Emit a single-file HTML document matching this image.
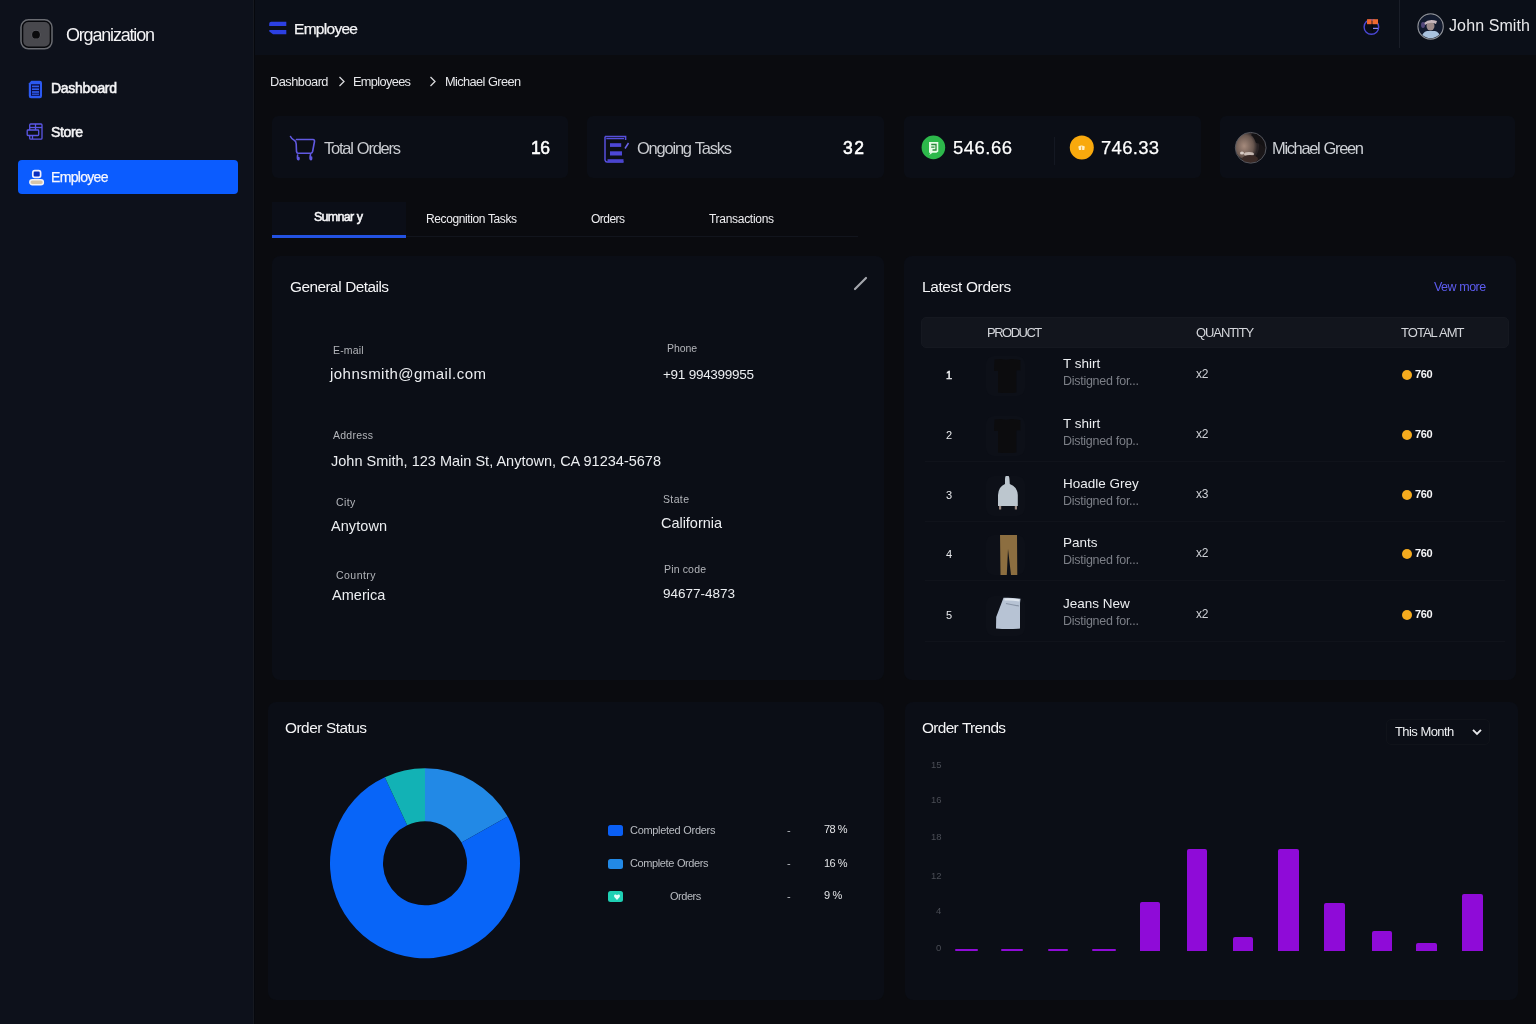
<!DOCTYPE html>
<html><head><meta charset="utf-8"><title>Employee</title>
<style>
html,body{margin:0;padding:0;width:1536px;height:1024px;overflow:hidden;background:#0a0b0f;font-family:"Liberation Sans",sans-serif;}
.t{position:absolute;white-space:nowrap;line-height:1;will-change:transform;}
</style></head><body>
<div style="position:absolute;left:0;top:0;width:254px;height:1024px;background:#0d111b"></div>
<div style="position:absolute;left:253px;top:0;width:1px;height:1024px;background:#161920"></div>
<div style="position:absolute;left:254px;top:0;width:1px;height:1024px;background:#06080d"></div>
<div style="position:absolute;left:255px;top:0;width:1281px;height:55px;background:#0b0f18"></div>
<svg style="position:absolute;left:19px;top:18px" width="35" height="33" viewBox="0 0 35 33">
<rect x="2" y="1.8" width="31" height="29" rx="7.5" fill="#07080c" stroke="#6a6c72" stroke-width="1.5"/>
<rect x="4.3" y="4" width="26.4" height="24.5" rx="5" fill="#48484d"/>
<circle cx="17" cy="16.7" r="4.6" fill="#5a5a60"/><circle cx="17" cy="16.7" r="3.9" fill="#0a0a0c"/>
</svg>
<svg style="position:absolute;left:28px;top:80px" width="15" height="19" viewBox="0 0 15 19">
<path d="M3.3 0.8 H11.8 Q14 0.8 14 3 V16 Q14 18.2 11.8 18.2 H3 Q0.8 18.2 0.8 16 V3.5 Z" fill="#2b59f2"/>
<rect x="3" y="4.2" width="9" height="11.6" fill="#0a0f4a"/>
<rect x="4" y="5.6" width="7" height="1.6" fill="#2f5cf0"/><rect x="4" y="8.4" width="7" height="1.6" fill="#2f5cf0"/><rect x="4" y="11.2" width="7" height="1.6" fill="#2f5cf0"/><rect x="4" y="13.6" width="7" height="1.2" fill="#2f5cf0"/>
</svg>
<svg style="position:absolute;left:26px;top:123px" width="17" height="18" viewBox="0 0 17 18">
<g fill="none" stroke="#5b57e6" stroke-width="1.3">
<rect x="3.7" y="1" width="12.3" height="15.2" rx="1"/><rect x="1.2" y="7" width="11.5" height="5.5" rx="0.8" fill="#0c1019"/>
<line x1="9.5" y1="1" x2="9.5" y2="7"/><line x1="4" y1="4.5" x2="16" y2="4.5"/><line x1="6.5" y1="12.5" x2="6.5" y2="16"/></g>
</svg>
<div style="position:absolute;left:18px;top:160px;width:220px;height:34px;background:#0b5cff;border-radius:4px"></div>
<svg style="position:absolute;left:28px;top:169px" width="17" height="17" viewBox="0 0 17 17">
<path d="M6.8 1.6 H10.6 Q12.6 1.6 12.6 3.8 V6.6 Q12.6 8.4 10.6 8.4 H6.8 Q4.8 8.4 4.8 6.6 V3.8 Q4.8 1.6 6.8 1.6 Z" fill="#0a2fc0" stroke="#eef0ff" stroke-width="1.7"/>
<rect x="1.8" y="10.8" width="13.6" height="5" rx="2.5" fill="#d6c4a8" stroke="#f2f2f6" stroke-width="1.4"/>
</svg>
<svg style="position:absolute;left:268px;top:20px" width="20" height="16" viewBox="0 0 20 16">
<path d="M3.2 1.8 H18.3 V6 H1.2 V3.8 Q1.2 1.8 3.2 1.8 Z" fill="#2c40e2"/>
<path d="M1.3 9.9 H18.3 V14.2 H5 L1.3 11.5 Z" fill="#2c40e2"/>
</svg>
<svg style="position:absolute;left:1362px;top:18px" width="19" height="19" viewBox="0 0 19 19">
<circle cx="9.4" cy="9" r="7.3" fill="#0a0d18" stroke="#4b48d6" stroke-width="1.4"/>
<rect x="5" y="1.2" width="4.6" height="5" fill="#f0652c"/><rect x="10.4" y="1.2" width="5.6" height="5" fill="#f06a30"/>
<rect x="9.8" y="6.5" width="0.8" height="8" fill="#05060a"/>
<rect x="11" y="9.8" width="5" height="1.2" fill="#8a86f0"/>
</svg>
<div style="position:absolute;left:1399px;top:0;width:1px;height:48px;background:#1a1e28"></div>
<svg style="position:absolute;left:1417px;top:13px" width="28" height="28" viewBox="0 0 28 28">
<defs><clipPath id="av1"><circle cx="13.6" cy="13.5" r="11.8"/></clipPath></defs>
<circle cx="13.6" cy="13.5" r="12.6" fill="#10131c" stroke="#8b8e96" stroke-width="1.3"/>
<g clip-path="url(#av1)"><rect x="0" y="0" width="28" height="28" fill="#121a2e"/>
<path d="M3 28 Q5 19 10 18 H18 Q23 19 25 28 Z" fill="#a9c2de"/>
<ellipse cx="13.5" cy="13" rx="4" ry="4.5" fill="#9c8a8a"/>
<path d="M7 10 Q12 5 20 8 L19 11 Q13 8 8 12 Z" fill="#c7b7bd"/>
<ellipse cx="6" cy="12" rx="2" ry="3" fill="#6c5a9a" opacity="0.7"/></g>
</svg>
<svg style="position:absolute;left:338px;top:76px" width="8" height="11" viewBox="0 0 8 11"><path d="M1.5 1 L6 5.5 L1.5 10" fill="none" stroke="#d8d9dc" stroke-width="1.3"/></svg>
<svg style="position:absolute;left:429px;top:76px" width="8" height="11" viewBox="0 0 8 11"><path d="M1.5 1 L6 5.5 L1.5 10" fill="none" stroke="#d8d9dc" stroke-width="1.3"/></svg>
<div style="position:absolute;left:272px;top:116px;width:296px;height:62px;background:#0b0e16;border-radius:6px"></div>
<div style="position:absolute;left:587px;top:116px;width:297px;height:62px;background:#0b0e16;border-radius:6px"></div>
<div style="position:absolute;left:904px;top:116px;width:297px;height:62px;background:#0b0e16;border-radius:6px"></div>
<div style="position:absolute;left:1220px;top:116px;width:295px;height:62px;background:#0b0e16;border-radius:6px"></div>
<svg style="position:absolute;left:284px;top:130px" width="36" height="36" viewBox="0 0 36 36">
<g fill="none" stroke="#6159e2" stroke-width="1.6" stroke-linecap="round" stroke-linejoin="round">
<path d="M6.5 6.5 Q8 9.5 10.2 10.2 Q12 11 12.2 14 L12.5 21.5 Q12.8 23.2 14 23.2 H27 Q28.2 23 28.6 21.5 L30.5 11.5 Q30.6 9.5 29 9.5 H12.4"/>
<path d="M13.6 25 Q13 29 14 29.5 Q15.4 30 14.8 27.5"/><path d="M26.5 24.5 Q25.5 28.5 26.5 29.5 Q28 30 27.5 27"/>
</g></svg>
<svg style="position:absolute;left:598px;top:130px" width="36" height="36" viewBox="0 0 36 36">
<path d="M7 6.5 H27.6 V10 M7 6.5 V30 Q7.5 32 9 32 H25.5" fill="none" stroke="#574fdb" stroke-width="1.5"/>
<path d="M8.3 8.6 H26" stroke="#574fdb" stroke-width="1.3"/>
<rect x="12" y="13.2" width="11.2" height="3.7" fill="#4d47d6"/><rect x="12" y="21.3" width="12" height="4.2" fill="#4d47d6"/>
<rect x="9.5" y="29.2" width="16" height="3.1" fill="#4a44cf"/>
<path d="M30.5 13 L27 18.5" stroke="#6a64e8" stroke-width="1.5"/>
</svg>
<svg style="position:absolute;left:921px;top:135px" width="25" height="25" viewBox="0 0 25 25">
<circle cx="12.4" cy="12.4" r="11.8" fill="#2db84b"/>
<path d="M8 7 H17.3 V16.5 L15.5 17.8 H11.5 L8.3 20 L9.3 17.8 H8 Z" fill="#e6fbe6"/>
<path d="M10.2 9.5 H15 V15 H11.5 M10.2 12.2 H13.5" fill="none" stroke="#2a8a3c" stroke-width="1.3"/>
</svg>
<div style="position:absolute;left:1054px;top:137px;width:1px;height:28px;background:#141822"></div>
<svg style="position:absolute;left:1069px;top:135px" width="25" height="25" viewBox="0 0 25 25">
<circle cx="12.8" cy="12.4" r="12" fill="#f9a90d"/>
<path d="M9.3 11.5 Q12.5 9.5 15.8 11.5 L15.3 15 H10 Z" fill="#fff6d6" opacity="0.9"/>
<rect x="12.2" y="11.5" width="0.9" height="3.5" fill="#f0a020"/>
</svg>
<svg style="position:absolute;left:1234px;top:131px" width="34" height="34" viewBox="0 0 34 34">
<defs><clipPath id="av2"><circle cx="16.7" cy="16.8" r="15.4"/></clipPath>
<radialGradient id="g2" cx="0.38" cy="0.5" r="0.55"><stop offset="0" stop-color="#a58a7c"/><stop offset="0.7" stop-color="#6a5850"/><stop offset="1" stop-color="#2a2426"/></radialGradient></defs>
<g clip-path="url(#av2)"><rect width="34" height="34" fill="#1a1618"/>
<ellipse cx="13" cy="15" rx="12" ry="14" fill="url(#g2)"/>
<path d="M19 2 Q30 5 31 18 Q28 12 22 12 Q20 6 17 4 Z" fill="#141214"/>
<ellipse cx="15" cy="23" rx="5" ry="2" fill="#e8dcd6" opacity="0.75"/><ellipse cx="8" cy="22" rx="2" ry="1.5" fill="#f0e6e0" opacity="0.8"/>
<ellipse cx="16" cy="28" rx="8" ry="4" fill="#3a2a26"/></g>
<circle cx="16.7" cy="16.8" r="15.4" fill="none" stroke="#5a5c64" stroke-width="0.9"/>
</svg>
<div style="position:absolute;left:272px;top:202px;width:134px;height:34px;background:#0b0e17"></div>
<div style="position:absolute;left:406px;top:236px;width:452px;height:1px;background:#12151d"></div>
<div style="position:absolute;left:272px;top:235px;width:134px;height:3px;background:#2352e2"></div>
<div style="position:absolute;left:272px;top:256px;width:612px;height:424px;background:#0b0e16;border-radius:8px"></div>
<div style="position:absolute;left:904px;top:256px;width:612px;height:424px;background:#0b0e16;border-radius:8px"></div>
<div style="position:absolute;left:268px;top:702px;width:616px;height:298px;background:#0b0e16;border-radius:8px"></div>
<div style="position:absolute;left:905px;top:702px;width:613px;height:298px;background:#0b0e16;border-radius:8px"></div>
<svg style="position:absolute;left:853px;top:276px" width="15" height="15" viewBox="0 0 15 15"><path d="M2 13 L13 2" stroke="#a4a6ac" stroke-width="2.2" stroke-linecap="round"/></svg>
<div style="position:absolute;left:921px;top:317px;width:586px;height:29px;background:#12151d;border:1px solid #151820;border-radius:5px"></div>
<div style="position:absolute;left:986px;top:356px;width:39px;height:40px;background:#0d1018;border-radius:8px"></div>
<div style="position:absolute;left:1402px;top:370px;width:10px;height:10px;border-radius:50%;background:#f4aa1e"></div>
<div style="position:absolute;left:986px;top:416px;width:39px;height:40px;background:#0d1018;border-radius:8px"></div>
<div style="position:absolute;left:1402px;top:430px;width:10px;height:10px;border-radius:50%;background:#f4aa1e"></div>
<div style="position:absolute;left:925px;top:461px;width:580px;height:1px;background:#10131b"></div>
<div style="position:absolute;left:986px;top:476px;width:39px;height:40px;background:#0d1018;border-radius:8px"></div>
<div style="position:absolute;left:1402px;top:490px;width:10px;height:10px;border-radius:50%;background:#f4aa1e"></div>
<div style="position:absolute;left:925px;top:521px;width:580px;height:1px;background:#10131b"></div>
<div style="position:absolute;left:986px;top:535px;width:39px;height:40px;background:#0d1018;border-radius:8px"></div>
<div style="position:absolute;left:1402px;top:549px;width:10px;height:10px;border-radius:50%;background:#f4aa1e"></div>
<div style="position:absolute;left:925px;top:580px;width:580px;height:1px;background:#10131b"></div>
<div style="position:absolute;left:986px;top:596px;width:39px;height:40px;background:#0d1018;border-radius:8px"></div>
<div style="position:absolute;left:1402px;top:610px;width:10px;height:10px;border-radius:50%;background:#f4aa1e"></div>
<div style="position:absolute;left:925px;top:641px;width:580px;height:1px;background:#10131b"></div>
<svg style="position:absolute;left:986px;top:356px" width="40" height="41" viewBox="0 0 40 41"><path d="M8.5 3.6 Q12 3 15 3 Q20 4.5 25 3 Q30 3.2 34.5 4.2 L34.5 14.2 L30.4 14.6 L30.4 36.5 Q21 37.6 12 36.5 L12 14.8 L8 15 Z" fill="#0c0c0e"/></svg>
<svg style="position:absolute;left:986px;top:416px" width="40" height="41" viewBox="0 0 40 41"><path d="M8.5 3.6 Q12 3 15 3 Q20 4.5 25 3 Q30 3.2 34.5 4.2 L34.5 14.2 L30.4 14.6 L30.4 36.5 Q21 37.6 12 36.5 L12 14.8 L8 15 Z" fill="#0c0c0e"/></svg>
<svg style="position:absolute;left:986px;top:476px" width="40" height="41" viewBox="0 0 40 41"><path d="M21 -1 Q23.5 -0.5 23.5 3.5 L23.8 8 Q31.3 10.5 31.8 19 L31.8 30 L12 30 L12 19 Q12.5 10.5 19 8 L19 3.5 Q19 -0.5 21 -1 Z" fill="#bcc6ce"/><rect x="13" y="30" width="2.2" height="3.5" fill="#9a8a84"/><rect x="28.8" y="30" width="2.2" height="3.5" fill="#9a8a84"/></svg>
<svg style="position:absolute;left:986px;top:535px" width="40" height="41" viewBox="0 0 40 41"><path d="M14 -1.4 H31 L31.3 40 H25 L22 14 L20.8 40 H14.5 Z" fill="#8c6e40"/></svg>
<svg style="position:absolute;left:986px;top:596px" width="40" height="41" viewBox="0 0 40 41"><path d="M17.5 1.8 Q25 1.2 34.5 2.8 L34 7 L34 32.5 Q22 33.5 10 32.5 L10.2 21 Z" fill="#b7c3d4"/><path d="M18.5 3.5 Q26 3 33.5 4.5" stroke="#dfe6ee" stroke-width="2.2" fill="none"/><path d="M20 7.5 Q27 9 33 10" stroke="#8a96a8" stroke-width="1.2" fill="none"/></svg>
<svg style="position:absolute;left:0;top:0" width="1536" height="1024"><path d="M425.00 768.30 A95 95 0 0 1 507.68 816.52 L461.55 842.62 A42 42 0 0 0 425.00 821.30 Z" fill="#2289e6"/><path d="M507.68 816.52 A95 95 0 1 1 384.85 777.20 L407.25 825.24 A42 42 0 1 0 461.55 842.62 Z" fill="#0865f8"/><path d="M384.85 777.20 A95 95 0 0 1 425.00 768.30 L425.00 821.30 A42 42 0 0 0 407.25 825.24 Z" fill="#12b2b5"/></svg>
<div style="position:absolute;left:608px;top:825px;width:15px;height:10.5px;border-radius:2.5px;background:#0a5ff5"></div>
<div style="position:absolute;left:608px;top:858.6px;width:15px;height:10.5px;border-radius:2.5px;background:#2289e6"></div>
<div style="position:absolute;left:608px;top:891.4px;width:15px;height:10.5px;border-radius:2.5px;background:#1fd0b4"></div>
<svg style="position:absolute;left:613px;top:892.5px" width="8" height="8" viewBox="0 0 8 8"><path d="M4 7 L1.3 4 Q0.5 2.5 1.8 1.6 Q3 1 4 2.2 Q5 1 6.2 1.6 Q7.5 2.5 6.7 4 Z" fill="#e6fffa"/></svg>
<div style="position:absolute;left:1386px;top:718.5px;width:102px;height:24px;background:#0b0e16;border:1px solid #10131a;border-radius:5px"></div>
<svg style="position:absolute;left:1470.5px;top:727.5px" width="12" height="8" viewBox="0 0 12 8"><path d="M2 1.8 L6 5.8 L10 1.8" fill="none" stroke="#e6e7ea" stroke-width="1.9"/></svg>
<div style="position:absolute;left:955.0px;top:949.0px;width:22.8px;height:1.8px;background:#8f0bd8;border-radius:1px"></div>
<div style="position:absolute;left:1000.6px;top:949.0px;width:22.4px;height:1.8px;background:#8f0bd8;border-radius:1px"></div>
<div style="position:absolute;left:1048.2px;top:949.0px;width:20.3px;height:1.8px;background:#8f0bd8;border-radius:1px"></div>
<div style="position:absolute;left:1091.7px;top:949.0px;width:24.3px;height:1.8px;background:#8f0bd8;border-radius:1px"></div>
<div style="position:absolute;left:1140.2px;top:901.5px;width:19.8px;height:49.3px;background:#8f0bd8;border-radius:2px 2px 0 0"></div>
<div style="position:absolute;left:1187.0px;top:849.0px;width:20.2px;height:101.8px;background:#8f0bd8;border-radius:2px 2px 0 0"></div>
<div style="position:absolute;left:1232.5px;top:936.7px;width:20.7px;height:14.1px;background:#8f0bd8;border-radius:2px 2px 0 0"></div>
<div style="position:absolute;left:1278.0px;top:849.0px;width:20.8px;height:101.8px;background:#8f0bd8;border-radius:2px 2px 0 0"></div>
<div style="position:absolute;left:1324.4px;top:902.8px;width:20.6px;height:48.0px;background:#8f0bd8;border-radius:2px 2px 0 0"></div>
<div style="position:absolute;left:1371.6px;top:931.0px;width:20.7px;height:19.8px;background:#8f0bd8;border-radius:2px 2px 0 0"></div>
<div style="position:absolute;left:1416.3px;top:943.4px;width:20.7px;height:7.4px;background:#8f0bd8;border-radius:2px 2px 0 0"></div>
<div style="position:absolute;left:1462.3px;top:894.0px;width:20.7px;height:56.8px;background:#8f0bd8;border-radius:2px 2px 0 0"></div>
<div class="t" style="left:65.5px;top:25.8px;font-size:18px;font-weight:400;color:#f4f4f6;letter-spacing:-1.188px;">Organization</div>
<div class="t" style="left:50.5px;top:80.6px;font-size:14px;font-weight:400;color:#f4f4f6;letter-spacing:-0.312px;-webkit-text-stroke:0.55px currentColor;">Dashboard</div>
<div class="t" style="left:50.5px;top:125.1px;font-size:14px;font-weight:400;color:#f4f4f6;letter-spacing:-0.367px;-webkit-text-stroke:0.55px currentColor;">Store</div>
<div class="t" style="left:50.5px;top:170.3px;font-size:14px;font-weight:400;color:#f6f7ff;letter-spacing:-0.681px;-webkit-text-stroke:0.25px currentColor;">Employee</div>
<div class="t" style="left:293.5px;top:20.6px;font-size:15.5px;font-weight:400;color:#f4f4f6;letter-spacing:-0.705px;-webkit-text-stroke:0.25px currentColor;">Employee</div>
<div class="t" style="left:1448.6px;top:17.7px;font-size:16px;font-weight:400;color:#e9e9ec;letter-spacing:0.115px;word-spacing:-0.080px;">John Smith</div>
<div class="t" style="left:270.0px;top:75.7px;font-size:12.8px;font-weight:400;color:#e6e7ea;letter-spacing:-0.514px;">Dashboard</div>
<div class="t" style="left:353.0px;top:75.7px;font-size:12.8px;font-weight:400;color:#e6e7ea;letter-spacing:-0.664px;">Employees</div>
<div class="t" style="left:444.5px;top:75.7px;font-size:12.8px;font-weight:400;color:#e6e7ea;letter-spacing:-0.639px;word-spacing:0.447px;">Michael Green</div>
<div class="t" style="left:324.0px;top:140.3px;font-size:16.5px;font-weight:300;color:#c9cbd0;letter-spacing:-1.250px;word-spacing:0.875px;">Total Orders</div>
<div class="t" style="left:530.7px;top:140.2px;font-size:17.5px;font-weight:400;color:#ffffff;letter-spacing:-0.469px;-webkit-text-stroke:0.55px currentColor;">16</div>
<div class="t" style="left:637.0px;top:140.3px;font-size:16.5px;font-weight:300;color:#c9cbd0;letter-spacing:-1.226px;word-spacing:0.859px;">Ongoing Tasks</div>
<div class="t" style="left:843.0px;top:140.2px;font-size:17.5px;font-weight:400;color:#ffffff;letter-spacing:1.531px;-webkit-text-stroke:0.55px currentColor;">32</div>
<div class="t" style="left:953.4px;top:139.1px;font-size:18.5px;font-weight:400;color:#ffffff;letter-spacing:0.481px;-webkit-text-stroke:0.25px currentColor;">546.66</div>
<div class="t" style="left:1100.6px;top:139.1px;font-size:18.5px;font-weight:400;color:#ffffff;letter-spacing:0.281px;-webkit-text-stroke:0.25px currentColor;">746.33</div>
<div class="t" style="left:1272.0px;top:140.3px;font-size:16.5px;font-weight:300;color:#cdd0d5;letter-spacing:-1.355px;word-spacing:0.949px;">Michael Green</div>
<div class="t" style="left:313.8px;top:211.3px;font-size:12.5px;font-weight:400;color:#f6f6f8;letter-spacing:-0.714px;word-spacing:0.500px;-webkit-text-stroke:0.55px currentColor;">Sumnar y</div>
<div class="t" style="left:426.0px;top:213.1px;font-size:12px;font-weight:400;color:#eeeef1;letter-spacing:-0.403px;word-spacing:0.282px;">Recognition Tasks</div>
<div class="t" style="left:591.0px;top:213.0px;font-size:12px;font-weight:400;color:#eeeef1;letter-spacing:-0.537px;">Orders</div>
<div class="t" style="left:708.7px;top:213.0px;font-size:12px;font-weight:400;color:#eeeef1;letter-spacing:-0.295px;">Transactions</div>
<div class="t" style="left:289.7px;top:278.6px;font-size:15.4px;font-weight:400;color:#f4f4f6;letter-spacing:-0.532px;word-spacing:0.373px;">General Details</div>
<div class="t" style="left:332.6px;top:345.0px;font-size:10.5px;font-weight:400;color:#b3b5ba;letter-spacing:0.147px;">E-mail</div>
<div class="t" style="left:329.8px;top:366.3px;font-size:15px;font-weight:400;color:#eceef1;letter-spacing:0.457px;">johnsmith@gmail.com</div>
<div class="t" style="left:667.4px;top:342.7px;font-size:10.5px;font-weight:400;color:#b3b5ba;letter-spacing:-0.094px;">Phone</div>
<div class="t" style="left:663.2px;top:368.0px;font-size:13.5px;font-weight:400;color:#eceef1;letter-spacing:-0.286px;word-spacing:0.200px;">+91 994399955</div>
<div class="t" style="left:332.7px;top:430.3px;font-size:10.5px;font-weight:400;color:#b3b5ba;letter-spacing:0.245px;">Address</div>
<div class="t" style="left:330.6px;top:453.9px;font-size:14.5px;font-weight:400;color:#eceef1;letter-spacing:0.008px;word-spacing:-0.005px;">John Smith, 123 Main St, Anytown, CA 91234-5678</div>
<div class="t" style="left:336.0px;top:497.3px;font-size:10.5px;font-weight:400;color:#b3b5ba;letter-spacing:0.402px;">City</div>
<div class="t" style="left:330.6px;top:519.1px;font-size:14.5px;font-weight:400;color:#eceef1;letter-spacing:0.062px;">Anytown</div>
<div class="t" style="left:663.2px;top:494.4px;font-size:10.5px;font-weight:400;color:#b3b5ba;letter-spacing:0.367px;">State</div>
<div class="t" style="left:661.0px;top:515.7px;font-size:14.5px;font-weight:400;color:#eceef1;letter-spacing:-0.028px;">California</div>
<div class="t" style="left:336.0px;top:569.5px;font-size:10.5px;font-weight:400;color:#b3b5ba;letter-spacing:0.456px;">Country</div>
<div class="t" style="left:331.8px;top:588.4px;font-size:14.5px;font-weight:400;color:#eceef1;letter-spacing:0.035px;">America</div>
<div class="t" style="left:664.0px;top:563.7px;font-size:10.5px;font-weight:400;color:#b3b5ba;letter-spacing:0.179px;word-spacing:-0.125px;">Pin code</div>
<div class="t" style="left:663.2px;top:587.2px;font-size:13.5px;font-weight:400;color:#eceef1;letter-spacing:-0.009px;">94677-4873</div>
<div class="t" style="left:921.7px;top:278.9px;font-size:15.4px;font-weight:400;color:#f4f4f6;letter-spacing:-0.350px;word-spacing:0.245px;">Latest Orders</div>
<div class="t" style="left:1433.8px;top:280.7px;font-size:12.5px;font-weight:400;color:#5d5cf0;letter-spacing:-0.539px;word-spacing:0.377px;">Vew more</div>
<div class="t" style="left:986.5px;top:325.9px;font-size:13px;font-weight:400;color:#d3d5da;letter-spacing:-1.497px;">PRODUCT</div>
<div class="t" style="left:1195.8px;top:326.0px;font-size:13px;font-weight:400;color:#d3d5da;letter-spacing:-1.076px;">QUANTITY</div>
<div class="t" style="left:1400.9px;top:326.0px;font-size:13px;font-weight:400;color:#d3d5da;letter-spacing:-0.967px;word-spacing:0.677px;">TOTAL AMT</div>
<div class="t" style="left:945.5px;top:370.2px;font-size:11px;font-weight:400;color:#e8e9ec;-webkit-text-stroke:0.55px currentColor;">1</div>
<div class="t" style="left:1063.0px;top:357.1px;font-size:13.5px;font-weight:400;color:#eceef1;">T shirt</div>
<div class="t" style="left:1063.0px;top:374.9px;font-size:12.5px;font-weight:400;color:#7b7e86;letter-spacing:-0.273px;word-spacing:0.191px;">Distigned for...</div>
<div class="t" style="left:1196.0px;top:368.3px;font-size:12px;font-weight:400;color:#cfd1d6;letter-spacing:-0.188px;">x2</div>
<div class="t" style="left:1414.5px;top:369.4px;font-size:11px;font-weight:700;color:#f6f6f8;letter-spacing:-0.430px;">760</div>
<div class="t" style="left:945.5px;top:430.2px;font-size:11px;font-weight:400;color:#e8e9ec;">2</div>
<div class="t" style="left:1063.0px;top:417.1px;font-size:13.5px;font-weight:400;color:#eceef1;">T shirt</div>
<div class="t" style="left:1063.0px;top:434.9px;font-size:12.5px;font-weight:400;color:#7b7e86;letter-spacing:-0.295px;word-spacing:0.206px;">Distigned fop..</div>
<div class="t" style="left:1196.0px;top:428.3px;font-size:12px;font-weight:400;color:#cfd1d6;letter-spacing:-0.188px;">x2</div>
<div class="t" style="left:1414.5px;top:429.4px;font-size:11px;font-weight:700;color:#f6f6f8;letter-spacing:-0.430px;">760</div>
<div class="t" style="left:945.5px;top:490.2px;font-size:11px;font-weight:400;color:#e8e9ec;">3</div>
<div class="t" style="left:1063.0px;top:477.1px;font-size:13.5px;font-weight:400;color:#eceef1;">Hoadle Grey</div>
<div class="t" style="left:1063.0px;top:494.9px;font-size:12.5px;font-weight:400;color:#7b7e86;letter-spacing:-0.273px;word-spacing:0.191px;">Distigned for...</div>
<div class="t" style="left:1196.0px;top:488.3px;font-size:12px;font-weight:400;color:#cfd1d6;letter-spacing:-0.188px;">x3</div>
<div class="t" style="left:1414.5px;top:489.4px;font-size:11px;font-weight:700;color:#f6f6f8;letter-spacing:-0.430px;">760</div>
<div class="t" style="left:945.5px;top:549.2px;font-size:11px;font-weight:400;color:#e8e9ec;">4</div>
<div class="t" style="left:1063.0px;top:536.1px;font-size:13.5px;font-weight:400;color:#eceef1;">Pants</div>
<div class="t" style="left:1063.0px;top:553.9px;font-size:12.5px;font-weight:400;color:#7b7e86;letter-spacing:-0.273px;word-spacing:0.191px;">Distigned for...</div>
<div class="t" style="left:1196.0px;top:547.3px;font-size:12px;font-weight:400;color:#cfd1d6;letter-spacing:-0.188px;">x2</div>
<div class="t" style="left:1414.5px;top:548.4px;font-size:11px;font-weight:700;color:#f6f6f8;letter-spacing:-0.430px;">760</div>
<div class="t" style="left:945.5px;top:610.2px;font-size:11px;font-weight:400;color:#e8e9ec;">5</div>
<div class="t" style="left:1063.0px;top:597.1px;font-size:13.5px;font-weight:400;color:#eceef1;">Jeans New</div>
<div class="t" style="left:1063.0px;top:614.9px;font-size:12.5px;font-weight:400;color:#7b7e86;letter-spacing:-0.273px;word-spacing:0.191px;">Distigned for...</div>
<div class="t" style="left:1196.0px;top:608.3px;font-size:12px;font-weight:400;color:#cfd1d6;letter-spacing:-0.188px;">x2</div>
<div class="t" style="left:1414.5px;top:609.4px;font-size:11px;font-weight:700;color:#f6f6f8;letter-spacing:-0.430px;">760</div>
<div class="t" style="left:285.4px;top:720.0px;font-size:15.4px;font-weight:400;color:#f4f4f6;letter-spacing:-0.510px;word-spacing:0.357px;">Order Status</div>
<div class="t" style="left:629.6px;top:824.5px;font-size:11px;font-weight:400;color:#b9bcc2;letter-spacing:-0.313px;word-spacing:0.219px;">Completed Orders</div>
<div class="t" style="left:787.0px;top:824.5px;font-size:11px;font-weight:400;color:#b9bcc2;">-</div>
<div class="t" style="left:823.8px;top:823.9px;font-size:11px;font-weight:400;color:#e2e3e6;letter-spacing:-0.643px;word-spacing:0.450px;">78 %</div>
<div class="t" style="left:629.6px;top:858.1px;font-size:11px;font-weight:400;color:#b9bcc2;letter-spacing:-0.388px;word-spacing:0.272px;">Complete Orders</div>
<div class="t" style="left:787.0px;top:858.1px;font-size:11px;font-weight:400;color:#b9bcc2;">-</div>
<div class="t" style="left:823.8px;top:857.5px;font-size:11px;font-weight:400;color:#e2e3e6;letter-spacing:-0.643px;word-spacing:0.450px;">16 %</div>
<div class="t" style="left:670.0px;top:890.9px;font-size:11px;font-weight:400;color:#b9bcc2;letter-spacing:-0.465px;">Orders</div>
<div class="t" style="left:787.0px;top:890.9px;font-size:11px;font-weight:400;color:#b9bcc2;">-</div>
<div class="t" style="left:823.8px;top:890.3px;font-size:11px;font-weight:400;color:#e2e3e6;letter-spacing:-0.591px;word-spacing:0.414px;">9 %</div>
<div class="t" style="left:922.0px;top:720.4px;font-size:15.4px;font-weight:400;color:#f4f4f6;letter-spacing:-0.648px;word-spacing:0.453px;">Order Trends</div>
<div class="t" style="left:1394.8px;top:725.0px;font-size:13px;font-weight:400;color:#eceef1;letter-spacing:-0.616px;word-spacing:0.431px;">This Month</div>
<div class="t" style="left:931.1px;top:759.6px;font-size:9.5px;font-weight:400;color:#4a4d55;">15</div>
<div class="t" style="left:931.1px;top:795.2px;font-size:9.5px;font-weight:400;color:#4a4d55;">16</div>
<div class="t" style="left:931.1px;top:832.0px;font-size:9.5px;font-weight:400;color:#4a4d55;">18</div>
<div class="t" style="left:931.1px;top:870.5px;font-size:9.5px;font-weight:400;color:#4a4d55;">12</div>
<div class="t" style="left:936.4px;top:906.3px;font-size:9.5px;font-weight:400;color:#4a4d55;">4</div>
<div class="t" style="left:936.4px;top:942.9px;font-size:9.5px;font-weight:400;color:#4a4d55;">0</div>
</body></html>
